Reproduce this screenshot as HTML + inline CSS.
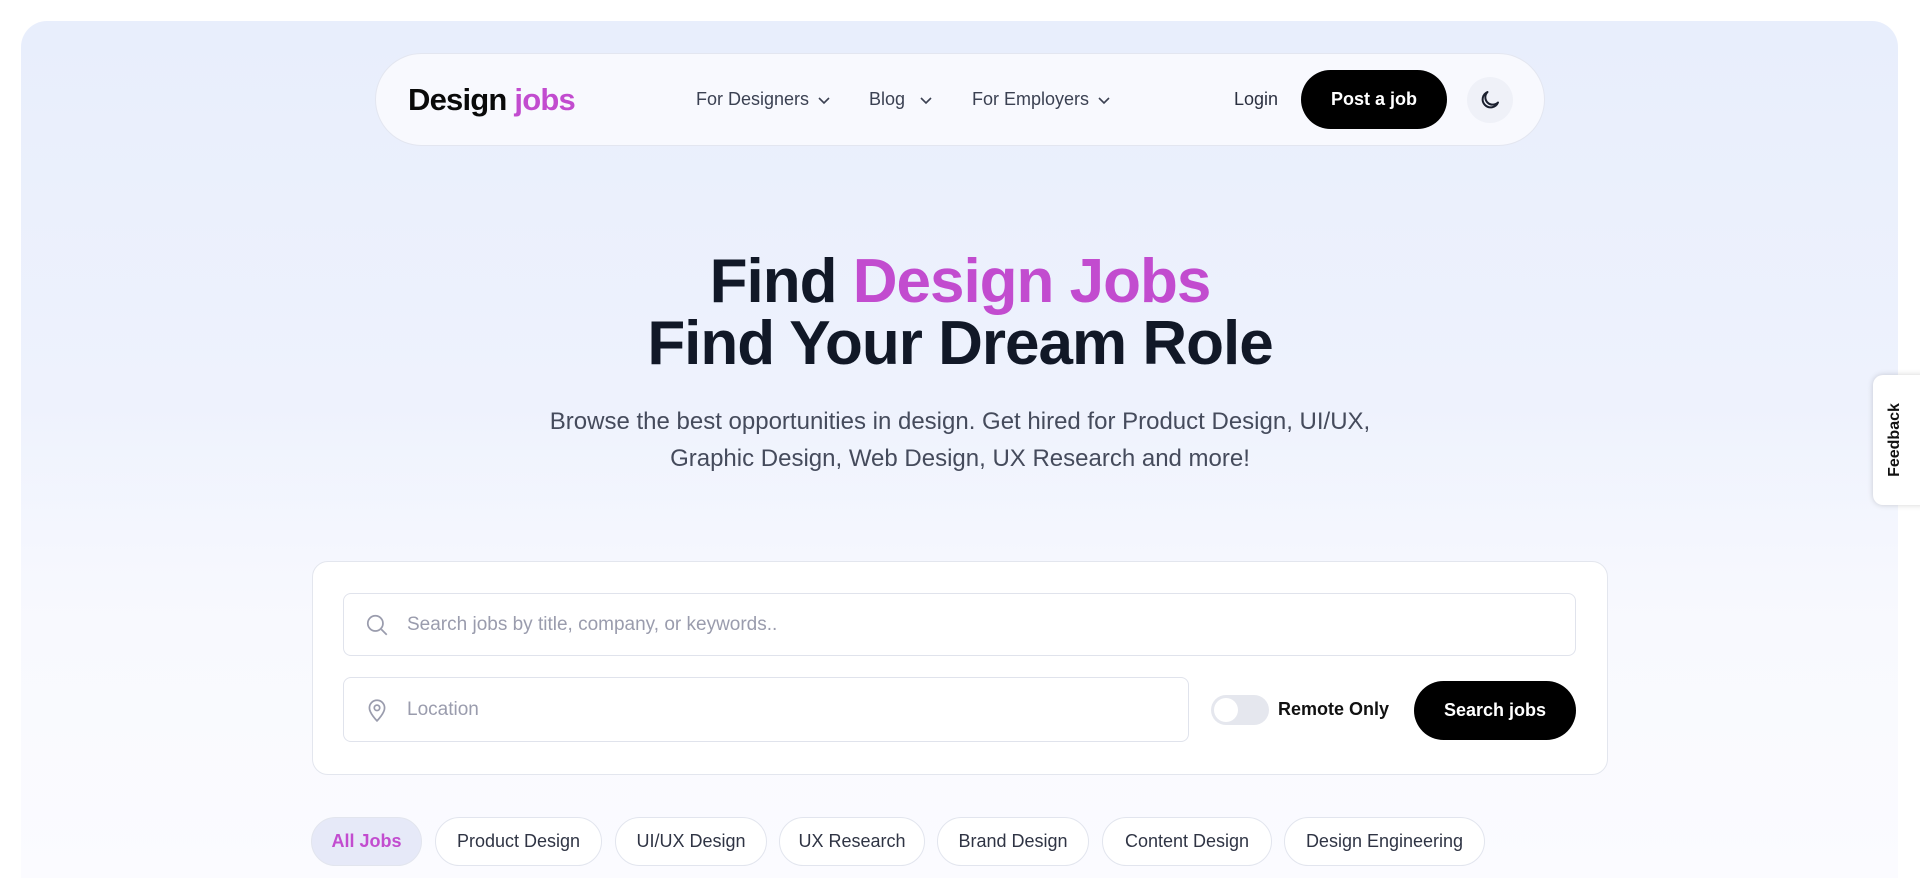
<!DOCTYPE html>
<html><head><meta charset="utf-8"><style>
*{box-sizing:border-box;margin:0;padding:0}
html,body{width:1920px;height:878px;overflow:hidden}
body{background:#fff;font-family:"Liberation Sans",sans-serif;position:relative}
.panel{position:absolute;left:21px;top:21px;width:1877px;height:857px;border-radius:26px 26px 0 0;background:linear-gradient(#e8eefc 0px,#eef2fd 380px,#f8f9fe 600px,#fbfbff 857px)}
.nav{position:absolute;left:375px;top:53px;width:1170px;height:93px;border-radius:47px;background:#f8f9fe;border:1px solid #e3e6f0}
.logo{position:absolute;left:32px;top:28px;font-size:31px;font-weight:700;letter-spacing:-0.8px;color:#0a0a0a}
.logo span{color:#c24ccf}
.ni{position:absolute;top:35px;font-size:18px;color:#3b4152;display:flex;align-items:center;gap:8px}
.ni svg{width:14px;height:14px}
.btn{position:absolute;background:#000;color:#fff;font-weight:700;display:flex;align-items:center;justify-content:center;border-radius:30px}
h1{position:absolute;left:0;width:1920px;text-align:center;font-size:62px;font-weight:700;color:#111827;letter-spacing:-1px;line-height:62px}
.sub{position:absolute;left:0;top:403px;width:1920px;text-align:center;font-size:24px;line-height:37px;color:#454b5c}
.card{position:absolute;left:312px;top:561px;width:1296px;height:214px;background:#fff;border:1px solid #e3e6ee;border-radius:16px}
.inp{position:absolute;border:1px solid #e0e3ec;border-radius:8px;background:#fff;font-size:19px;color:#9a9cad;display:flex;align-items:center}
.inp svg{position:absolute;left:20px}
.inp span{position:absolute;left:63px}
.chip{position:absolute;top:817px;height:49px;border:1px solid #e2e5ee;border-radius:25px;background:#fff;font-size:18px;color:#2f3444;display:flex;align-items:center;justify-content:center}
</style></head><body>
<div class="panel"></div>
<div class="nav">
 <div class="logo">Design <span>jobs</span></div>
 <div class="ni" style="left:320px">For Designers <svg viewBox="0 0 14 14"><path d="M2 5l5 5 5-5" fill="none" stroke="#3b4152" stroke-width="1.6"/></svg></div>
 <div class="ni" style="left:493px">Blog <svg viewBox="0 0 14 14" style="margin-left:6px"><path d="M2 5l5 5 5-5" fill="none" stroke="#3b4152" stroke-width="1.6"/></svg></div>
 <div class="ni" style="left:596px">For Employers <svg viewBox="0 0 14 14"><path d="M2 5l5 5 5-5" fill="none" stroke="#3b4152" stroke-width="1.6"/></svg></div>
 <div class="ni" style="left:858px;color:#2b3040">Login</div>
 <div class="btn" style="left:925px;top:16px;width:146px;height:59px;font-size:18px">Post a job</div>
 <div style="position:absolute;left:1091px;top:23px;width:46px;height:46px;border-radius:50%;background:#eff1f8;display:flex;align-items:center;justify-content:center"><svg width="24" height="24" viewBox="0 0 24 24"><path d="M20 14.5A8 8 0 1 1 9.5 4a6.5 6.5 0 0 0 10.5 10.5z" fill="none" stroke="#1a1f2e" stroke-width="2" stroke-linejoin="round"/></svg></div>
</div>
<h1 style="top:251px">Find <span style="color:#c24ccf">Design Jobs</span></h1>
<h1 style="top:313px">Find Your Dream Role</h1>
<div class="sub">Browse the best opportunities in design. Get hired for Product Design, UI/UX,<br>Graphic Design, Web Design, UX Research and more!</div>
<div class="card"></div>
<div class="inp" style="left:343px;top:593px;width:1233px;height:63px"><svg width="26" height="26" viewBox="0 0 24 24"><circle cx="10.5" cy="10.5" r="7" fill="none" stroke="#9a9cad" stroke-width="1.6"/><path d="M16 16l5 5" stroke="#9a9cad" stroke-width="1.6"/></svg><span>Search jobs by title, company, or keywords..</span></div>
<div class="inp" style="left:343px;top:677px;width:846px;height:65px"><svg width="26" height="26" viewBox="0 0 24 24"><path d="M12 22s-7-7-7-12a7 7 0 0 1 14 0c0 5-7 12-7 12z" fill="none" stroke="#9a9cad" stroke-width="1.6"/><circle cx="12" cy="10" r="2.5" fill="none" stroke="#9a9cad" stroke-width="1.6"/></svg><span>Location</span></div>
<div style="position:absolute;left:1211px;top:695px;width:58px;height:30px;border-radius:15px;background:#e5e7ee"><div style="position:absolute;left:3px;top:3px;width:24px;height:24px;border-radius:50%;background:#fff"></div></div>
<div style="position:absolute;left:1278px;top:699px;font-size:18px;font-weight:700;color:#111">Remote Only</div>
<div class="btn" style="left:1414px;top:681px;width:162px;height:59px;font-size:18px">Search jobs</div>
<div class="chip" style="left:311px;width:111px;background:#e6e9f8;color:#c24ccf;font-weight:700">All Jobs</div>
<div class="chip" style="left:435px;width:167px">Product Design</div>
<div class="chip" style="left:615px;width:152px">UI/UX Design</div>
<div class="chip" style="left:779px;width:146px">UX Research</div>
<div class="chip" style="left:937px;width:152px">Brand Design</div>
<div class="chip" style="left:1102px;width:170px">Content Design</div>
<div class="chip" style="left:1284px;width:201px">Design Engineering</div>
<div style="position:absolute;left:1873px;top:375px;width:60px;height:130px;background:#fff;border-radius:10px;box-shadow:0 0 6px rgba(0,0,0,0.18)"><div style="position:absolute;left:22px;top:65px;transform:translate(-50%,-50%) rotate(-90deg);font-size:16px;font-weight:700;color:#111;white-space:nowrap">Feedback</div></div>
</body></html>
